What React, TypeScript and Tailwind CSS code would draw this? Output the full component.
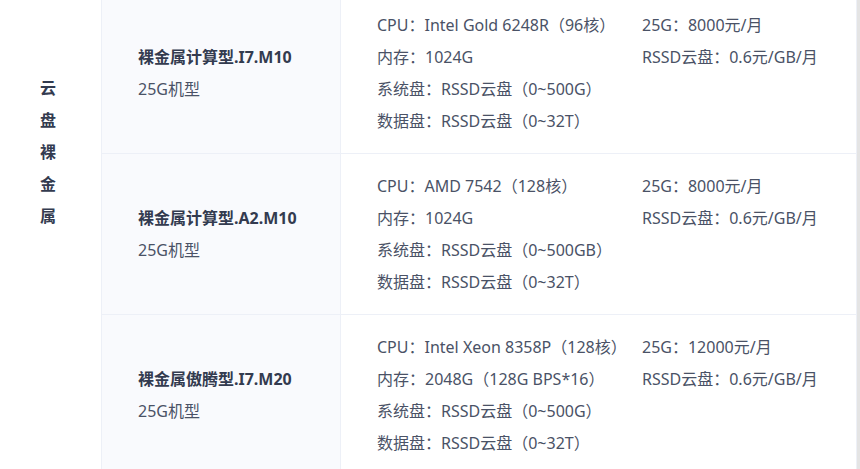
import React from "react";

type Spec = {
  name: string;
  tag: string;
  left: string[];
  right: string[];
};

const specs: Spec[] = [
  {
    name: "裸金属计算型.I7.M10",
    tag: "25G机型",
    left: [
      "CPU：Intel Gold 6248R（96核）",
      "内存：1024G",
      "系统盘：RSSD云盘（0~500G）",
      "数据盘：RSSD云盘（0~32T）",
    ],
    right: ["25G：8000元/月", "RSSD云盘：0.6元/GB/月"],
  },
  {
    name: "裸金属计算型.A2.M10",
    tag: "25G机型",
    left: [
      "CPU：AMD 7542（128核）",
      "内存：1024G",
      "系统盘：RSSD云盘（0~500GB）",
      "数据盘：RSSD云盘（0~32T）",
    ],
    right: ["25G：8000元/月", "RSSD云盘：0.6元/GB/月"],
  },
  {
    name: "裸金属傲腾型.I7.M20",
    tag: "25G机型",
    left: [
      "CPU：Intel Xeon 8358P（128核）",
      "内存：2048G（128G BPS*16）",
      "系统盘：RSSD云盘（0~500G）",
      "数据盘：RSSD云盘（0~32T）",
    ],
    right: ["25G：12000元/月", "RSSD云盘：0.6元/GB/月"],
  },
];

const font = {
  fontFamily: '"Noto Sans", "Noto Sans CJK SC", sans-serif',
};

function SpecRow({ spec }: { spec: Spec }) {
  return (
    <div className="grid h-[161px] shrink-0 grid-cols-[239px_1fr] border-b border-[#edf0f7]">
      <div className="flex flex-col justify-center border-r border-[#edf0f7] bg-[#f9fafd] pl-[36px]">
        <p className="text-[16px] font-bold leading-[32px] text-[#333b4f]">{spec.name}</p>
        <p className="text-[16px] leading-[32px] text-[#4a5266]">{spec.tag}</p>
      </div>
      <div className="flex py-[16px] pl-[36px] text-[16px] leading-[32px] text-[#4a5266] [text-spacing-trim:space-all]">
        <div className="w-[265px] shrink-0">
          {spec.left.map((line) => (
            <p key={line} className="whitespace-nowrap">
              {line}
            </p>
          ))}
        </div>
        <div>
          {spec.right.map((line) => (
            <p key={line} className="whitespace-nowrap">
              {line}
            </p>
          ))}
        </div>
      </div>
    </div>
  );
}

export default function App() {
  return (
    <div className="flex h-[469px] w-[860px] overflow-hidden bg-white" style={font}>
      <div className="w-[101px] shrink-0 pl-[40px] pt-[72px]">
        {"云盘裸金属".split("").map((ch) => (
          <p key={ch} className="text-[16px] font-bold leading-[32px] text-[#333b4f]">
            {ch}
          </p>
        ))}
      </div>
      <div className="flex w-[756px] flex-col border-x border-[#edf0f7]">
        <div className="-mt-[7px] flex flex-col">
          {specs.map((s) => (
            <SpecRow key={s.name} spec={s} />
          ))}
        </div>
      </div>
      <div className="w-[3px] bg-[#e4e4e4]" />
    </div>
  );
}
